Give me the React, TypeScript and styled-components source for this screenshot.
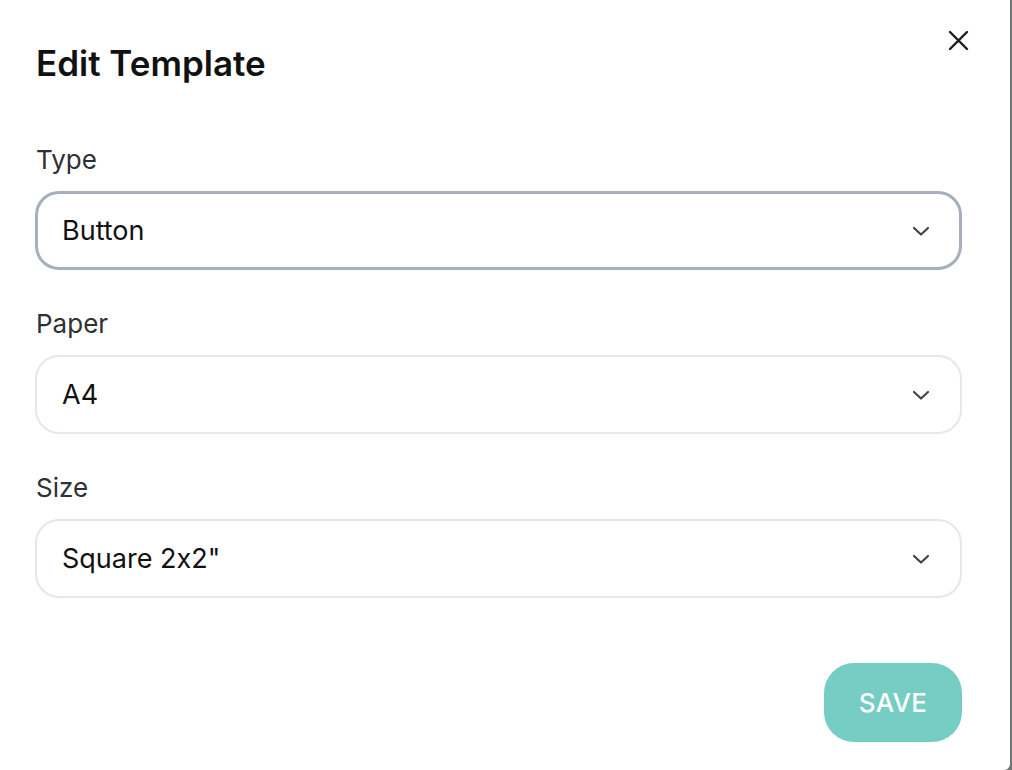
import React from 'react'
import styled, { createGlobalStyle } from 'styled-components'

const GlobalStyle = createGlobalStyle`
  html, body {
    margin: 0;
    padding: 0;
    background: #6f7573;
    font-family: Inter, "Noto Sans", sans-serif;
    font-feature-settings: "calt" 0;
  }
`

const Dialog = styled.div`
  width: 1010px;
  height: 770px;
  box-sizing: border-box;
  background: #fff;
  border-bottom-right-radius: 6px;
  padding: 43px 48px 0 35px;
  display: flex;
  flex-direction: column;
  position: relative;
`

const Title = styled.h2`
  margin: 0 0 0 1px;
  font-size: 35px;
  line-height: 40px;
  font-weight: 600;
  color: #111;
`

const Close = styled.button`
  position: absolute;
  top: 26px;
  right: 38px;
  width: 28px;
  height: 28px;
  padding: 0;
  border: none;
  background: none;
  display: flex;
  align-items: center;
  justify-content: center;
  cursor: pointer;
`

const Form = styled.div`
  display: flex;
  flex-direction: column;
  gap: 38px;
  margin-top: 61px;
`

const Field = styled.div`
  display: flex;
  flex-direction: column;
  gap: 15px;
`

const Label = styled.label`
  margin-left: 1px;
  font-size: 26px;
  line-height: 32px;
  font-weight: 400;
  color: #2f3033;
`

const Select = styled.div<{ $focused?: boolean }>`
  height: 79px;
  box-sizing: border-box;
  border-radius: 24px;
  border: ${p => (p.$focused ? '3px solid #a6afbd' : '2px solid #e6e7ea')};
  padding: 0 ${p => (p.$focused ? '29px' : '30px')} 0 ${p => (p.$focused ? '24px' : '25px')};
  display: flex;
  align-items: center;
  justify-content: space-between;
  font-size: 27px;
  color: #111;
`

const Footer = styled.div`
  display: flex;
  justify-content: flex-end;
  margin-top: 65px;
`

const SaveButton = styled.button`
  width: 138px;
  height: 79px;
  border: none;
  border-radius: 30px;
  background: #75cdc3;
  color: #fff;
  font-family: Inter, "Noto Sans", sans-serif;
  font-size: 26px;
  font-weight: 500;
  letter-spacing: 0.3px;
  cursor: pointer;
`

const Chevron = () => (
  <svg width="18" height="18" viewBox="0 0 18 18" fill="none">
    <path d="M2 6l7 6.5L16 6" stroke="#444" strokeWidth="2.2" strokeLinecap="round" strokeLinejoin="round" />
  </svg>
)

const fields = [
  { label: 'Type', value: 'Button', focused: true },
  { label: 'Paper', value: 'A4' },
  { label: 'Size', value: 'Square 2x2"' },
]

export default function App() {
  return (
    <>
      <GlobalStyle />
      <Dialog>
        <Title>Edit Template</Title>
        <Close aria-label="Close">
          <svg width="21" height="21" viewBox="0 0 21 21" fill="none">
            <path d="M2 2l17 17M19 2L2 19" stroke="#1d1d1f" strokeWidth="2.4" strokeLinecap="round" />
          </svg>
        </Close>
        <Form>
          {fields.map(f => (
            <Field key={f.label}>
              <Label>{f.label}</Label>
              <Select $focused={f.focused}>
                <span>{f.value}</span>
                <Chevron />
              </Select>
            </Field>
          ))}
        </Form>
        <Footer>
          <SaveButton>SAVE</SaveButton>
        </Footer>
      </Dialog>
    </>
  )
}
